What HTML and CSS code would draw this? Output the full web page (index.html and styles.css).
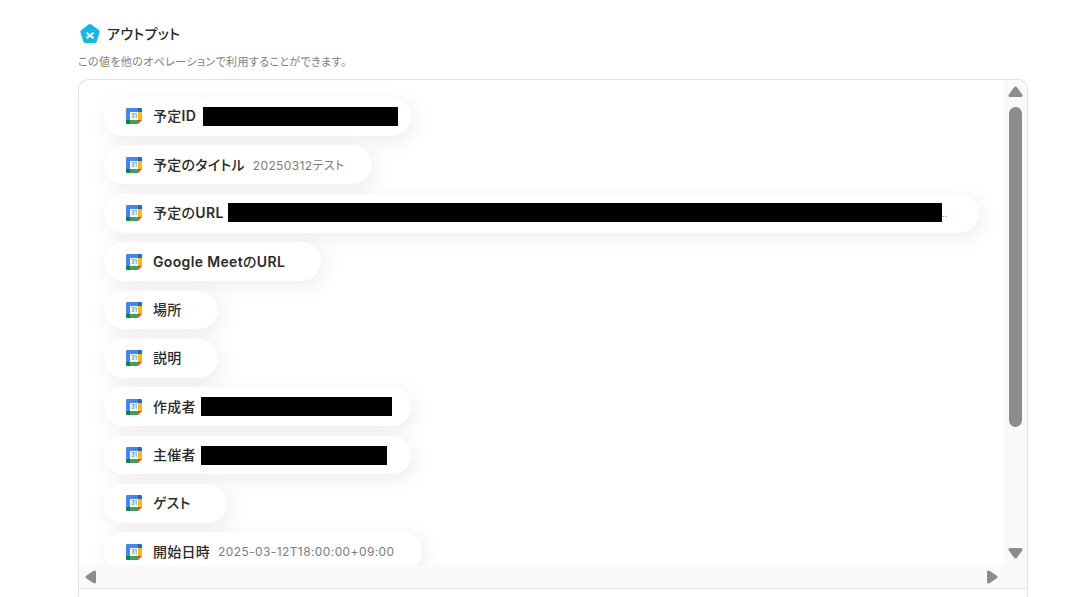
FILE: index.html
```html
<!DOCTYPE html>
<html lang="ja">
<head>
    <meta charset="UTF-8">
    <title>アウトプット</title>
    <link rel="stylesheet" href="styles.css">
</head>
<body>

<main class="section">
    <div class="title">
        <svg class="logo" viewBox="0 0 20 20">
            <path fill="#12b9e6" d="M8.6 .6a2.3 2.3 0 0 1 2.8 0l7.3 5.4c.8.6 1.1 1.6.8 2.5l-2.7 8.800a2.300 2.300 0 0 1-2.200 1.600H5.400a2.300 2.300 0 0 1-2.200-1.600L.5 8.500C.2 7.600.5 6.600 1.300 6z"/>
            <path fill="none" stroke="#fff" stroke-width="2" stroke-linecap="round" d="M7.200 9.200l5.600 4.400M12.800 9.200l-5.600 4.400"/>
        </svg>
        <h2>アウトプット</h2>
    </div>
    <p class="note">この値を他のオペレーションで利用することができます。</p>

    <div class="box">
        <div class="list">
            <div class="pill wide">
                <svg class="icon" viewBox="0 0 16 16"><path fill="#fff" d="M12 4H4v8h8z"/><path fill="#ea4335" d="M12 16l4-4h-4z"/><path fill="#fbbc04" d="M16 4h-4v8h4z"/><path fill="#34a853" d="M12 12H4v4h8z"/><path fill="#188038" d="M0 12v2.700C0 15.400.6 16 1.300 16H4v-4z"/><path fill="#1967d2" d="M16 4V1.300C16 .6 15.400 0 14.700 0H12v4z"/><path fill="#4285f4" d="M12 0H1.300C.6 0 0 .6 0 1.300V12h4V4h8z"/><text class="num" x="8" y="10.200" text-anchor="middle">31</text></svg>
                <b>予定<span class="en">ID</span></b>
                <span class="mask w195"></span>
            </div>
            <div class="pill">
                <svg class="icon" viewBox="0 0 16 16"><path fill="#fff" d="M12 4H4v8h8z"/><path fill="#ea4335" d="M12 16l4-4h-4z"/><path fill="#fbbc04" d="M16 4h-4v8h4z"/><path fill="#34a853" d="M12 12H4v4h8z"/><path fill="#188038" d="M0 12v2.700C0 15.400.6 16 1.300 16H4v-4z"/><path fill="#1967d2" d="M16 4V1.300C16 .6 15.400 0 14.700 0H12v4z"/><path fill="#4285f4" d="M12 0H1.300C.6 0 0 .6 0 1.300V12h4V4h8z"/><text class="num" x="8" y="10.200" text-anchor="middle">31</text></svg>
                <b>予定のタイトル</b>
                <span class="val">20250312テスト</span>
            </div>
            <div class="pill long">
                <svg class="icon" viewBox="0 0 16 16"><path fill="#fff" d="M12 4H4v8h8z"/><path fill="#ea4335" d="M12 16l4-4h-4z"/><path fill="#fbbc04" d="M16 4h-4v8h4z"/><path fill="#34a853" d="M12 12H4v4h8z"/><path fill="#188038" d="M0 12v2.700C0 15.400.6 16 1.300 16H4v-4z"/><path fill="#1967d2" d="M16 4V1.300C16 .6 15.400 0 14.700 0H12v4z"/><path fill="#4285f4" d="M12 0H1.300C.6 0 0 .6 0 1.300V12h4V4h8z"/><text class="num" x="8" y="10.200" text-anchor="middle">31</text></svg>
                <b>予定の<span class="en">URL</span></b>
                <span class="mask w714"></span>
                <span class="dots">..</span>
            </div>
            <div class="pill">
                <svg class="icon" viewBox="0 0 16 16"><path fill="#fff" d="M12 4H4v8h8z"/><path fill="#ea4335" d="M12 16l4-4h-4z"/><path fill="#fbbc04" d="M16 4h-4v8h4z"/><path fill="#34a853" d="M12 12H4v4h8z"/><path fill="#188038" d="M0 12v2.700C0 15.400.6 16 1.300 16H4v-4z"/><path fill="#1967d2" d="M16 4V1.300C16 .6 15.400 0 14.700 0H12v4z"/><path fill="#4285f4" d="M12 0H1.300C.6 0 0 .6 0 1.300V12h4V4h8z"/><text class="num" x="8" y="10.200" text-anchor="middle">31</text></svg>
                <b><span class="en">Google Meet</span>の<span class="en">URL</span></b>
            </div>
            <div class="pill">
                <svg class="icon" viewBox="0 0 16 16"><path fill="#fff" d="M12 4H4v8h8z"/><path fill="#ea4335" d="M12 16l4-4h-4z"/><path fill="#fbbc04" d="M16 4h-4v8h4z"/><path fill="#34a853" d="M12 12H4v4h8z"/><path fill="#188038" d="M0 12v2.700C0 15.400.6 16 1.300 16H4v-4z"/><path fill="#1967d2" d="M16 4V1.300C16 .6 15.400 0 14.700 0H12v4z"/><path fill="#4285f4" d="M12 0H1.300C.6 0 0 .6 0 1.300V12h4V4h8z"/><text class="num" x="8" y="10.200" text-anchor="middle">31</text></svg>
                <b>場所</b>
            </div>
            <div class="pill">
                <svg class="icon" viewBox="0 0 16 16"><path fill="#fff" d="M12 4H4v8h8z"/><path fill="#ea4335" d="M12 16l4-4h-4z"/><path fill="#fbbc04" d="M16 4h-4v8h4z"/><path fill="#34a853" d="M12 12H4v4h8z"/><path fill="#188038" d="M0 12v2.700C0 15.400.6 16 1.300 16H4v-4z"/><path fill="#1967d2" d="M16 4V1.300C16 .6 15.400 0 14.700 0H12v4z"/><path fill="#4285f4" d="M12 0H1.300C.6 0 0 .6 0 1.300V12h4V4h8z"/><text class="num" x="8" y="10.200" text-anchor="middle">31</text></svg>
                <b>説明</b>
            </div>
            <div class="pill wide">
                <svg class="icon" viewBox="0 0 16 16"><path fill="#fff" d="M12 4H4v8h8z"/><path fill="#ea4335" d="M12 16l4-4h-4z"/><path fill="#fbbc04" d="M16 4h-4v8h4z"/><path fill="#34a853" d="M12 12H4v4h8z"/><path fill="#188038" d="M0 12v2.700C0 15.400.6 16 1.300 16H4v-4z"/><path fill="#1967d2" d="M16 4V1.300C16 .6 15.400 0 14.700 0H12v4z"/><path fill="#4285f4" d="M12 0H1.300C.6 0 0 .6 0 1.300V12h4V4h8z"/><text class="num" x="8" y="10.200" text-anchor="middle">31</text></svg>
                <b>作成者</b>
                <span class="mask w191"></span>
            </div>
            <div class="pill wide">
                <svg class="icon" viewBox="0 0 16 16"><path fill="#fff" d="M12 4H4v8h8z"/><path fill="#ea4335" d="M12 16l4-4h-4z"/><path fill="#fbbc04" d="M16 4h-4v8h4z"/><path fill="#34a853" d="M12 12H4v4h8z"/><path fill="#188038" d="M0 12v2.700C0 15.400.6 16 1.300 16H4v-4z"/><path fill="#1967d2" d="M16 4V1.300C16 .6 15.400 0 14.700 0H12v4z"/><path fill="#4285f4" d="M12 0H1.300C.6 0 0 .6 0 1.300V12h4V4h8z"/><text class="num" x="8" y="10.200" text-anchor="middle">31</text></svg>
                <b>主催者</b>
                <span class="mask w186"></span>
            </div>
            <div class="pill">
                <svg class="icon" viewBox="0 0 16 16"><path fill="#fff" d="M12 4H4v8h8z"/><path fill="#ea4335" d="M12 16l4-4h-4z"/><path fill="#fbbc04" d="M16 4h-4v8h4z"/><path fill="#34a853" d="M12 12H4v4h8z"/><path fill="#188038" d="M0 12v2.700C0 15.400.6 16 1.300 16H4v-4z"/><path fill="#1967d2" d="M16 4V1.300C16 .6 15.400 0 14.700 0H12v4z"/><path fill="#4285f4" d="M12 0H1.300C.6 0 0 .6 0 1.300V12h4V4h8z"/><text class="num" x="8" y="10.200" text-anchor="middle">31</text></svg>
                <b>ゲスト</b>
            </div>
            <div class="pill">
                <svg class="icon" viewBox="0 0 16 16"><path fill="#fff" d="M12 4H4v8h8z"/><path fill="#ea4335" d="M12 16l4-4h-4z"/><path fill="#fbbc04" d="M16 4h-4v8h4z"/><path fill="#34a853" d="M12 12H4v4h8z"/><path fill="#188038" d="M0 12v2.700C0 15.400.6 16 1.300 16H4v-4z"/><path fill="#1967d2" d="M16 4V1.300C16 .6 15.400 0 14.700 0H12v4z"/><path fill="#4285f4" d="M12 0H1.300C.6 0 0 .6 0 1.300V12h4V4h8z"/><text class="num" x="8" y="10.200" text-anchor="middle">31</text></svg>
                <b>開始日時</b>
                <span class="val">2025-03-12T18:00:00+09:00</span>
            </div>
        </div>

        <div class="vbar">
            <svg class="arrow-v" viewBox="0 0 15 11"><path d="M7.500 2L13 9.500H2z"/></svg>
            <span class="thumb"></span>
            <svg class="arrow-v" viewBox="0 0 15 11"><path d="M2 1.500H13L7.500 9z"/></svg>
        </div>
        <div class="hbar">
            <svg class="arrow-h" viewBox="0 0 11 14"><path d="M2 7L9.500 2V12z"/></svg>
            <svg class="arrow-h" viewBox="0 0 11 14"><path d="M1.500 2L9 7L1.500 12z"/></svg>
        </div>
        <div class="corner"></div>
    </div>
</main>

</body>
</html>
```

FILE: styles.css
```css
* {
    margin: 0;
    padding: 0;
    box-sizing: border-box;
}

html, body {
    height: 100%;
    overflow: hidden;
}

body {
    background-color: #fff;
    color: #2b2b2b;
    font-family: Inter, "Noto Sans CJK JP", sans-serif;
    font-feature-settings: "palt";
}

.section {
    display: flex;
    flex-direction: column;
    width: 950px;
    height: 100%;
    margin-left: 78px;
    padding-top: 24px;
}

.title {
    display: flex;
    align-items: center;
    gap: 7px;
    height: 20px;
    padding-left: 2px;
}

.logo {
    width: 20px;
    height: 20px;
}

.title h2 {
    margin-top: -2px;
    font-size: 14px;
    font-weight: 500;
    letter-spacing: 0.35px;
}

.note {
    margin-top: 11px;
    color: #808080;
    font-size: 11px;
    line-height: 15px;
    letter-spacing: 0.38px;
}

.box {
    display: grid;
    flex: 1;
    grid-template-columns: 1fr 23px;
    grid-template-rows: 485px 24px 1fr;
    margin-top: 9px;
    border: 1px solid #e2e2e2;
    border-bottom: none;
    border-radius: 10px 10px 0 0;
    overflow: hidden;
}

.list {
    display: flex;
    flex-direction: column;
    align-items: flex-start;
    gap: 9.7px;
    padding: 17.100px 0 0 25px;
    overflow: hidden;
}

.pill {
    display: flex;
    flex: none;
    align-items: center;
    height: 38.700px;
    padding: 0 27px 0 22px;
    border-radius: 20px;
    background-color: #fff;
    box-shadow: 3px 5px 20px rgba(0, 0, 0, 0.08);
    font-size: 14px;
}

.pill.wide {
    width: 307px;
}

.pill.long {
    width: 875px;
}

.icon {
    flex: none;
    width: 16px;
    height: 16px;
    margin-right: 11px;
}

.num {
    fill: #5b93f0;
    font-family: Inter, sans-serif;
    font-size: 5.500px;
    font-weight: 700;
}

.pill b {
    margin-top: -2px;
    font-weight: 500;
    letter-spacing: 0.25px;
    white-space: nowrap;
}

.pill b:last-child {
    margin-right: 9px;
}

.en {
    font-weight: 600;
    letter-spacing: 0.35px;
}

.val {
    margin-left: 8px;
    color: #7c7c7c;
    font-size: 12px;
    letter-spacing: 0.4px;
    white-space: nowrap;
}

.mask {
    flex: none;
    height: 19px;
    background-color: #000;
}

.w195 { width: 195px; margin-left: 6.500px; }
.w714 { width: 714px; margin: -1px 0 0 4px; }
.w191 { width: 191px; margin-left: 5px; }
.w186 { width: 186px; margin-left: 5px; }

.dots {
    color: #7c7c7c;
    font-size: 10px;
}

.vbar {
    display: flex;
    flex-direction: column;
    align-items: center;
    justify-content: space-between;
    position: relative;
    padding: 6px 0;
    background-color: #fafafa;
}

.thumb {
    position: absolute;
    top: 27px;
    left: 5px;
    width: 13px;
    height: 320px;
    border-radius: 7px;
    background-color: #8c8c8c;
}

.hbar {
    display: flex;
    align-items: center;
    justify-content: space-between;
    padding: 0 6px;
    background-color: #fafafa;
    border-bottom: 1px solid #e2e2e2;
}

.corner {
    background-color: #fafafa;
    border-bottom: 1px solid #e2e2e2;
}

.arrow-v {
    width: 15px;
    height: 11px;
}

.arrow-h {
    width: 11px;
    height: 14px;
}

.arrow-v path, .arrow-h path {
    fill: #8c8c8c;
    stroke: #8c8c8c;
    stroke-width: 3px;
    stroke-linejoin: round;
}
```
